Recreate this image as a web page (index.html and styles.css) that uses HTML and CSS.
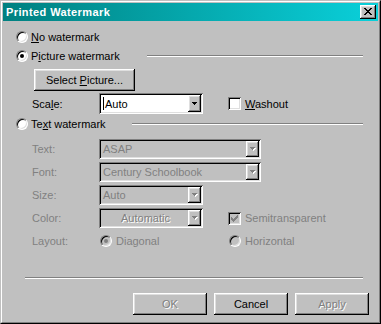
FILE: index.html
```html
<!DOCTYPE html>
<html>

<head>
    <link rel="stylesheet" href="styles.css">
</head>

<body>

    <div class="window">
        <div class="frame">

            <div class="titlebar">
                <span class="title">Printed Watermark</span>
                <button class="close raised">
                    <svg width="8" height="7" viewBox="0 0 8 7" shape-rendering="crispEdges">
                        <path d="M0 0h2v1h-2z M6 0h2v1h-2z M1 1h2v1h-2z M5 1h2v1h-2z M2 2h4v1h-4z M3 3h2v1h-2z M2 4h4v1h-4z M1 5h2v1h-2z M5 5h2v1h-2z M0 6h2v1h-2z M6 6h2v1h-2z" />
                    </svg>
                </button>
            </div>

            <div class="body">

                <div class="opt no">
                    <span class="radio"></span>
                    <span><u>N</u>o watermark</span>
                </div>

                <div class="opt pic">
                    <span class="radio on"></span>
                    <span>P<u>i</u>cture watermark</span>
                    <span class="rule pic-rule"></span>
                </div>

                <div class="select-row">
                    <button class="btn raised select">Select <u>P</u>icture...</button>
                </div>

                <div class="field scale">
                    <span class="lbl">Sca<u>l</u>e:</span>
                    <div class="combo short">
                        <span class="value"><i class="caret"></i>Auto</span>
                        <span class="drop raised">
                            <svg width="5" height="3" viewBox="0 0 5 3" shape-rendering="crispEdges">
                                <path d="M0 0h5v1h-1v1h-1v1h-1v-1h-1v-1h-1z" />
                            </svg>
                        </span>
                    </div>
                    <div class="item">
                        <span class="check"></span>
                        <span><u>W</u>ashout</span>
                    </div>
                </div>

                <div class="opt txt">
                    <span class="radio"></span>
                    <span>Te<u>x</u>t watermark</span>
                    <span class="rule txt-rule"></span>
                </div>

                <div class="field off first">
                    <span class="lbl">Text:</span>
                    <div class="combo long off">
                        <span class="value">ASAP</span>
                        <span class="drop raised">
                            <svg width="6" height="4" viewBox="0 0 6 4" shape-rendering="crispEdges">
                                <path fill="#fff" d="M1 1h5v1h-1v1h-1v1h-1v-1h-1v-1h-1z" />
                                <path fill="#808080" d="M0 0h5v1h-1v1h-1v1h-1v-1h-1v-1h-1z" />
                            </svg>
                        </span>
                    </div>
                </div>

                <div class="field off">
                    <span class="lbl">Font:</span>
                    <div class="combo long off">
                        <span class="value">Century Schoolbook</span>
                        <span class="drop raised">
                            <svg width="6" height="4" viewBox="0 0 6 4" shape-rendering="crispEdges">
                                <path fill="#fff" d="M1 1h5v1h-1v1h-1v1h-1v-1h-1v-1h-1z" />
                                <path fill="#808080" d="M0 0h5v1h-1v1h-1v1h-1v-1h-1v-1h-1z" />
                            </svg>
                        </span>
                    </div>
                </div>

                <div class="field off">
                    <span class="lbl">Size:</span>
                    <div class="combo short off">
                        <span class="value">Auto</span>
                        <span class="drop raised">
                            <svg width="6" height="4" viewBox="0 0 6 4" shape-rendering="crispEdges">
                                <path fill="#fff" d="M1 1h5v1h-1v1h-1v1h-1v-1h-1v-1h-1z" />
                                <path fill="#808080" d="M0 0h5v1h-1v1h-1v1h-1v-1h-1v-1h-1z" />
                            </svg>
                        </span>
                    </div>
                </div>

                <div class="field off">
                    <span class="lbl">Color:</span>
                    <div class="combo short off">
                        <span class="value center emboss">Automatic</span>
                        <span class="drop raised">
                            <svg width="6" height="4" viewBox="0 0 6 4" shape-rendering="crispEdges">
                                <path fill="#fff" d="M1 1h5v1h-1v1h-1v1h-1v-1h-1v-1h-1z" />
                                <path fill="#808080" d="M0 0h5v1h-1v1h-1v1h-1v-1h-1v-1h-1z" />
                            </svg>
                        </span>
                    </div>
                    <div class="item">
                        <span class="check off">
                            <svg width="7" height="7" viewBox="0 0 7 7" shape-rendering="crispEdges">
                                <path fill="#808080" d="M6 0h1v1h-1z M5 1h2v1h-2z M0 2h1v1h-1z M4 2h3v1h-3z M0 3h2v1h-2z M3 3h3v1h-3z M0 4h5v1h-5z M1 5h3v1h-3z M2 6h1v1h-1z" />
                            </svg>
                        </span>
                        <span>Semitransparent</span>
                    </div>
                </div>

                <div class="field off layout">
                    <span class="lbl">Layout:</span>
                    <div class="item diag">
                        <span class="radio on off"></span>
                        <span>Diagonal</span>
                    </div>
                    <div class="item horiz">
                        <span class="radio off"></span>
                        <span>Horizontal</span>
                    </div>
                </div>

                <div class="sep"></div>

                <div class="buttons">
                    <button class="btn raised dis">OK</button>
                    <button class="btn raised">Cancel</button>
                    <button class="btn raised dis">Apply</button>
                </div>

            </div>
        </div>
    </div>

</body>

</html>
```

FILE: styles.css
```css
body {
    margin: 0;
    background-color: #c0c0c0;
    font-family: "Liberation Sans", Arial, sans-serif;
    font-size: 11px;
    color: #000;
    overflow: hidden;
}

/* window frame */

.window {
    width: 381px;
    height: 324px;
    box-sizing: border-box;
    border: 1px solid;
    border-color: #c0c0c0 #000 #000 #c0c0c0;
    background-color: #c0c0c0;
}

.frame {
    height: 100%;
    box-sizing: border-box;
    border: 1px solid;
    border-color: #fff #808080 #808080 #fff;
    padding: 1px;
}

.titlebar {
    height: 18px;
    display: flex;
    align-items: center;
    padding-left: 3px;
    background: linear-gradient(to right, #008080, #0ad0da);
    color: #fff;
    font-weight: bold;
}

.title {
    flex: 1;
    letter-spacing: 0.4px;
}

.raised {
    box-shadow: inset -1px -1px #000, inset 1px 1px #fff, inset -2px -2px #808080, inset 2px 2px #dfdfdf;
}

.close {
    width: 16px;
    height: 14px;
    margin-right: 2px;
    padding: 0;
    border: 0;
    background-color: #c0c0c0;
    display: flex;
    align-items: center;
    justify-content: center;
}

.close svg {
    margin: 0 0 1px 0;
}

/* dialog body */

.body {
    padding: 9px 15px 0 13px;
}

.opt,
.item {
    display: flex;
    align-items: center;
    gap: 3px;
    height: 14px;
}

.item {
    gap: 4px;
}

.pic {
    margin-top: 5px;
}

.txt {
    margin-top: 3px;
}

.rule {
    margin-left: auto;
    height: 0;
    border-top: 1px solid #808080;
    border-bottom: 1px solid #fff;
}

.pic-rule {
    width: 216px;
}

.txt-rule {
    width: 231px;
}

.radio {
    flex: none;
    position: relative;
    width: 12px;
    height: 12px;
    box-sizing: border-box;
    border-radius: 50%;
    border: 1px solid;
    border-color: #808080 #fff #fff #808080;
    background-color: #fff;
    box-shadow: inset 1px 1px #000, inset -1px -1px #dfdfdf;
}

.radio.on::after {
    content: "";
    position: absolute;
    left: 3px;
    top: 3px;
    width: 4px;
    height: 4px;
    border-radius: 50%;
    background-color: #000;
}

.radio.off {
    background-color: #c0c0c0;
}

.radio.off.on::after {
    background-color: #808080;
}

.check {
    flex: none;
    width: 13px;
    height: 13px;
    background-color: #fff;
    box-shadow: inset 1px 1px #808080, inset -1px -1px #fff, inset 2px 2px #000, inset -2px -2px #dfdfdf;
    display: flex;
    align-items: center;
    justify-content: center;
}

.check.off {
    background-color: #c0c0c0;
}

/* buttons */

.btn {
    height: 22px;
    padding: 0;
    border: 0;
    background-color: #c0c0c0;
    font-family: inherit;
    font-size: 11px;
    color: #000;
}

.select-row {
    margin-top: 6px;
}

.select {
    margin-left: 18px;
    width: 101px;
}

.btn.dis {
    color: #808080;
    text-shadow: 1px 1px #fff;
}

/* field rows */

.field {
    display: grid;
    grid-template-columns: 67px 129px 1fr;
    align-items: center;
    margin-left: 16px;
    height: 20px;
    margin-top: 3px;
}

.scale {
    margin-top: 2px;
    height: 21px;
}

.field.first {
    margin-top: 8px;
}

.field.off {
    color: #808080;
}

.combo {
    display: flex;
    box-sizing: border-box;
    height: 20px;
    padding: 2px;
    background-color: #fff;
    box-shadow: inset 1px 1px #808080, inset -1px -1px #fff, inset 2px 2px #000, inset -2px -2px #dfdfdf;
}

.scale .combo {
    height: 21px;
}

.combo.off {
    background-color: #c0c0c0;
}

.short {
    width: 104px;
}

.long {
    grid-column: 2 / span 2;
    width: 162px;
}

.value {
    flex: 1;
    display: flex;
    align-items: center;
    padding-left: 2px;
    white-space: nowrap;
    overflow: hidden;
}

.value.center {
    justify-content: center;
}

.emboss {
    text-shadow: 1px 1px #fff;
}

.caret {
    display: inline-block;
    width: 1px;
    height: 13px;
    margin-right: 1px;
    background-color: #000;
}

.drop {
    width: 13px;
    display: flex;
    align-items: center;
    justify-content: center;
    background-color: #c0c0c0;
}

.layout {
    height: 14px;
    margin-top: 6px;
}

.diag {
    margin-left: 1px;
}

.horiz {
    margin-left: 1px;
}

.sep {
    margin: 29px 0 0 9px;
    height: 0;
    border-top: 1px solid #808080;
    border-bottom: 1px solid #fff;
}

.buttons {
    display: flex;
    justify-content: flex-end;
    gap: 7px;
    margin: 14px -6px 0 0;
}

.buttons .btn {
    width: 74px;
}
```
